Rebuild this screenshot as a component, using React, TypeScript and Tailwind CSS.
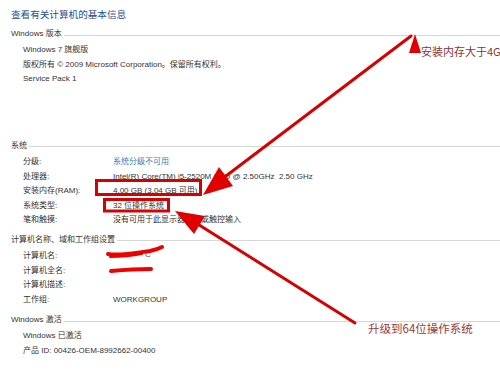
const sections = [
  {
    title: 'Windows 版本',
    mt: 'mt-[5px]',
    rows: [
      { label: 'Windows 7 旗舰版' },
      { label: '版权所有 © 2009 Microsoft Corporation。保留所有权利。' },
      { label: 'Service Pack 1' },
    ],
  },
  {
    title: '系统',
    mt: 'mt-[52px]',
    rows: [
      { label: '分级:', value: '系统分级不可用', link: true },
      { label: '处理器:', value: 'Intel(R) Core(TM) i5-2520M CPU @ 2.50GHz  2.50 GHz' },
      { label: '安装内存(RAM):', value: '4.00 GB (3.04 GB 可用)' },
      { label: '系统类型:', value: '32 位操作系统' },
      { label: '笔和触摸:', value: '没有可用于此显示器的笔或触控输入' },
    ],
  },
  {
    title: '计算机名称、域和工作组设置',
    mt: 'mt-[5px]',
    rows: [
      { label: '计算机名:', value: '' },
      { label: '计算机全名:', value: '' },
      { label: '计算机描述:', value: '' },
      { label: '工作组:', value: 'WORKGROUP' },
    ],
  },
  {
    title: 'Windows 激活',
    mt: 'mt-[6px]',
    rows: [
      { label: 'Windows 已激活' },
      { label: '产品 ID: 00426-OEM-8992662-00400' },
    ],
  },
];

function Annotations() {
  return (
    <svg className="absolute inset-0 pointer-events-none" width="500" height="377" viewBox="0 0 500 377">
      {/* boxes */}
      <rect x="96.5" y="180.5" width="104" height="14" fill="none" stroke="#d60000" strokeWidth="3" />
      <rect x="104.5" y="199.5" width="64" height="11.5" fill="none" stroke="#d60000" strokeWidth="3" />

      {/* arrow to RAM box */}
      <line x1="411" y1="36" x2="222" y2="179" stroke="#d60000" strokeWidth="3" strokeLinecap="round" />
      <polygon points="203,195 219,167 233,186" fill="#e00000" />
      <polygon points="415,34 409,53 421,53" fill="#e00000" />

      {/* arrow to system type box */}
      <line x1="355" y1="323" x2="196" y2="223" stroke="#d60000" strokeWidth="3" strokeLinecap="round" />
      <polygon points="175,211 205,216 194,234" fill="#e00000" />

      {/* scribbles over computer name */}
      <path d="M108 254 C120 256 135 253 150 251 C155 250 160 248 162 247" fill="none" stroke="#ee0000" strokeWidth="4" strokeLinecap="round" />
      <path d="M110 257 C122 257 132 256 142 254" fill="none" stroke="#ee0000" strokeWidth="2" strokeLinecap="round" />
      <path d="M111 271 C122 270 135 269 151 269" fill="none" stroke="#ee0000" strokeWidth="4" strokeLinecap="round" />
    </svg>
  );
}

export default function App() {
  return (
    <div className="relative w-[500px] h-[377px] overflow-hidden bg-white font-['Liberation_Sans','Noto_Sans_CJK_SC',sans-serif] text-[#333]">
      <div className="pl-[11px] pt-[8px]">
        <h1 className="text-[9.6px] leading-[14px] text-[#1f4f8e]">查看有关计算机的基本信息</h1>

        {sections.map((section) => (
          <div key={section.title} className={section.mt}>
            <div className="flex items-center h-[14px] text-[8px]">
              <span className="whitespace-nowrap">{section.title}</span>
              <div className="flex-1 h-px bg-[#d6d6d6] ml-[2px] mt-[2px]" />
            </div>
            <div className="mt-[2px] pl-[12px]">
              {section.rows.map((row, i) => (
                <div key={i} className="flex h-[14.6px] items-center text-[8px] whitespace-pre">
                  {'value' in row ? (
                    <>
                      <span className="w-[90px] shrink-0">{row.label}</span>
                      <span className={row.link ? 'text-[#3c7db8]' : ''}>{row.value}</span>
                    </>
                  ) : (
                    <span>{row.label}</span>
                  )}
                </div>
              ))}
            </div>
          </div>
        ))}
      </div>

      <span className="absolute left-[145px] top-[249px] text-[8px] text-[#555]">C</span>
      <Annotations />

      <span className="absolute left-[421px] top-[44px] text-[11px] leading-[15px] whitespace-nowrap text-[#8e3434] font-['Noto_Sans_CJK_SC',sans-serif]">
        安装内存大于4G
      </span>
      <span className="absolute left-[368px] top-[320px] text-[11.5px] leading-[16px] whitespace-nowrap text-[#9a3a3a] font-['Noto_Sans_CJK_SC',sans-serif]">
        升级到64位操作系统
      </span>
    </div>
  );
}
